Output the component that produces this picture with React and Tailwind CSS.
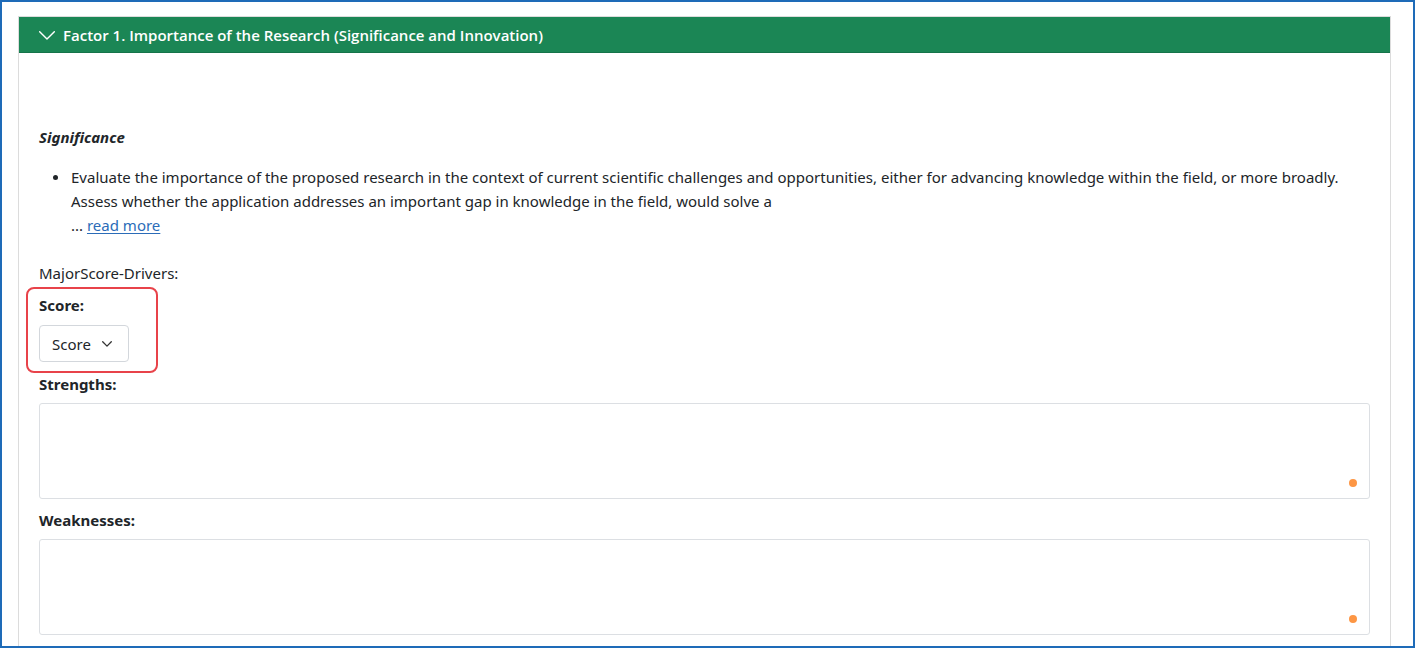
import React from "react";

function Chevron({ className, stroke = "#fff", w = 16, h = 9, sw = 1.4 }) {
  return (
    <svg className={className} width={w} height={h} viewBox={`0 0 ${w} ${h}`} fill="none">
      <polyline points={`0.7,0.7 ${w / 2},${h - 0.9} ${w - 0.7},0.7`} stroke={stroke} strokeWidth={sw} strokeLinecap="round" strokeLinejoin="round" />
    </svg>
  );
}

function TextBox() {
  return (
    <div className="relative h-[96px] border border-[#dcdfe3] rounded-[3px] bg-white">
      <span className="absolute right-[12px] bottom-[11px] w-[8px] h-[8px] rounded-full bg-[#fd9644]" />
    </div>
  );
}

export default function App() {
  return (
    <div className="w-[1415px] h-[648px] border-2 border-[#1e6bb8] bg-white overflow-hidden font-['Noto_Sans',sans-serif] text-[15px] leading-[24px] text-[#212529]">
      <div className="ml-[16px] mt-[14px] w-[1373px] border border-[#dcdcdc] border-b-0">
        <div className="h-[36px] bg-[#1b8655] border-b border-[#16744a] flex items-center pl-[20px] gap-[8px]">
          <Chevron className="mt-[1px]" />
          <span className="font-['Open_Sans',sans-serif] font-semibold text-white text-[15px]">
            Factor 1. Importance of the Research (Significance and Innovation)
          </span>
        </div>
        <div className="px-[20px] pt-[72px] pb-[40px]">
          <div className="font-bold italic">Significance</div>
          <div className="mt-[16px] flex">
            <div className="w-[32px] shrink-0 flex justify-start pl-[14px] pt-[10px]">
              <span className="w-[5px] h-[5px] rounded-full bg-[#212529]" />
            </div>
            <div>
              Evaluate the importance of the proposed research in the context of current scientific challenges and opportunities, either for advancing knowledge within the field, or more broadly.
              <br />
              Assess whether the application addresses an important gap in knowledge in the field, would solve a
              <br />
              ... <a href="#" className="text-[#2b6cb8] underline underline-offset-2">read more</a>
            </div>
          </div>
          <div className="mt-[24px]">MajorScore-Drivers:</div>
          <div className="relative mt-[8px]">
            <div className="absolute left-[-13px] top-[-6px] w-[132px] h-[86px] border-2 border-[#e8434a] rounded-[8px] pointer-events-none" />
            <div className="font-bold">Score:</div>
            <div className="mt-[8px] w-[90px] h-[37px] border border-[#d3d7dc] rounded-[4px] flex items-center pl-[12px] gap-[11px]">
              <span>Score</span>
              <Chevron stroke="#333" w={10} h={6} sw={1.3} />
            </div>
          </div>
          <div className="mt-[10px] font-bold">Strengths:</div>
          <div className="mt-[7px]">
            <TextBox />
          </div>
          <div className="mt-[9px] font-bold">Weaknesses:</div>
          <div className="mt-[7px]">
            <TextBox />
          </div>
        </div>
      </div>
    </div>
  );
}
